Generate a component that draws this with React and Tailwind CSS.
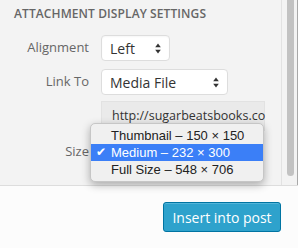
import React from "react";

function Arrows() {
  return (
    <svg width="6" height="11" viewBox="0 0 6 11" className="shrink-0">
      <path d="M3 0.5 L5.8 4.2 L0.2 4.2 Z" fill="#333" />
      <path d="M3 10.5 L5.8 6.8 L0.2 6.8 Z" fill="#333" />
    </svg>
  );
}

function Row({ label, children, h = "h-[26px]" }) {
  return (
    <div className={`flex items-center ${h}`}>
      <div className="w-[89px] text-right text-[13px] text-[#666] pr-0">{label}</div>
      <div className="ml-[12px] flex">{children}</div>
    </div>
  );
}

export default function App() {
  const font = { fontFamily: '"Open Sans", sans-serif' };
  return (
    <div className="w-[298px] h-[248px] flex flex-col bg-[#fcfcfc] overflow-hidden" style={font}>
      <div className="h-[186px] flex bg-[#f3f3f3] relative border-b border-[#dddddd]">
        <div className="flex-1 flex flex-col">
          <div className="pl-[14px] pt-[5px] h-[35px] text-[12px] font-semibold text-[#666] tracking-[0.1px] uppercase">
            Attachment Display Settings
          </div>
          <div className="flex flex-col gap-[8px]">
            <Row label="Alignment">
              <div className="w-[69px] h-[26px] bg-white border border-[#ddd] rounded-[4px] flex items-center justify-between pl-[8px] pr-[8px] text-[14px] text-[#333] shadow-[inset_0_1px_2px_rgba(0,0,0,0.04)]">
                <span>Left</span>
                <Arrows />
              </div>
            </Row>
            <Row label="Link To">
              <div className="w-[127px] h-[26px] bg-white border border-[#ddd] rounded-[4px] flex items-center justify-between pl-[8px] pr-[8px] text-[14px] text-[#333]">
                <span>Media File</span>
                <Arrows />
              </div>
            </Row>
          </div>
          <div className="flex mt-[6px]">
            <div className="w-[101px]" />
            <div className="w-[164px] h-[30px] bg-[#eaeaea] border border-[#e2e2e2] flex items-center pl-[10px] pr-[2px] text-[12.5px] text-[#333] whitespace-nowrap">
              http://sugarbeatsbooks.co
            </div>
          </div>
          <div className="flex items-center h-[26px] mt-[8px]">
            <div className="w-[89px] text-right text-[13px] text-[#666]">Size</div>
          </div>
        </div>
        <div className="w-[17px] border-l border-[#e2e2e2] border-r border-r-[#a8a8a8] flex justify-center pl-[1px]">
          <div className="w-[7px] h-[176px] bg-[#c2c2c2] rounded-b-[4px]" />
        </div>

        <div
          className="absolute left-[90px] top-[123px] w-[174px] h-[59px] bg-[#f0f0f0] border border-[#c6c6c6] rounded-[5px] shadow-[0_3px_8px_rgba(0,0,0,0.3)] pt-[3px] text-[13px] text-[#222]"
          style={{ fontFamily: '"Liberation Sans", Arial, sans-serif' }}
        >
          <div className="h-[17px] flex items-center pl-[20px]">Thumbnail – 150 × 150</div>
          <div className="h-[17px] flex items-center bg-[#3b7ff7] text-white relative pl-[20px]">
            <span className="absolute left-[5px] top-0 text-[12px] leading-[17px]" style={{ fontFamily: '"DejaVu Sans", sans-serif' }}>✔</span>
            Medium – 232 × 300
          </div>
          <div className="h-[17px] flex items-center pl-[20px]">Full Size – 548 × 706</div>
        </div>
      </div>
      <div className="flex-1 flex justify-end pr-[17px] pt-[16px]">
        <button className="w-[118px] h-[30px] bg-[#2ea2cc] border border-[#0074a2] rounded-[3px] text-white text-[14px] font-medium shadow-[inset_0_1px_0_rgba(120,200,230,0.5)]" style={font}>
          Insert into post
        </button>
      </div>
    </div>
  );
}
